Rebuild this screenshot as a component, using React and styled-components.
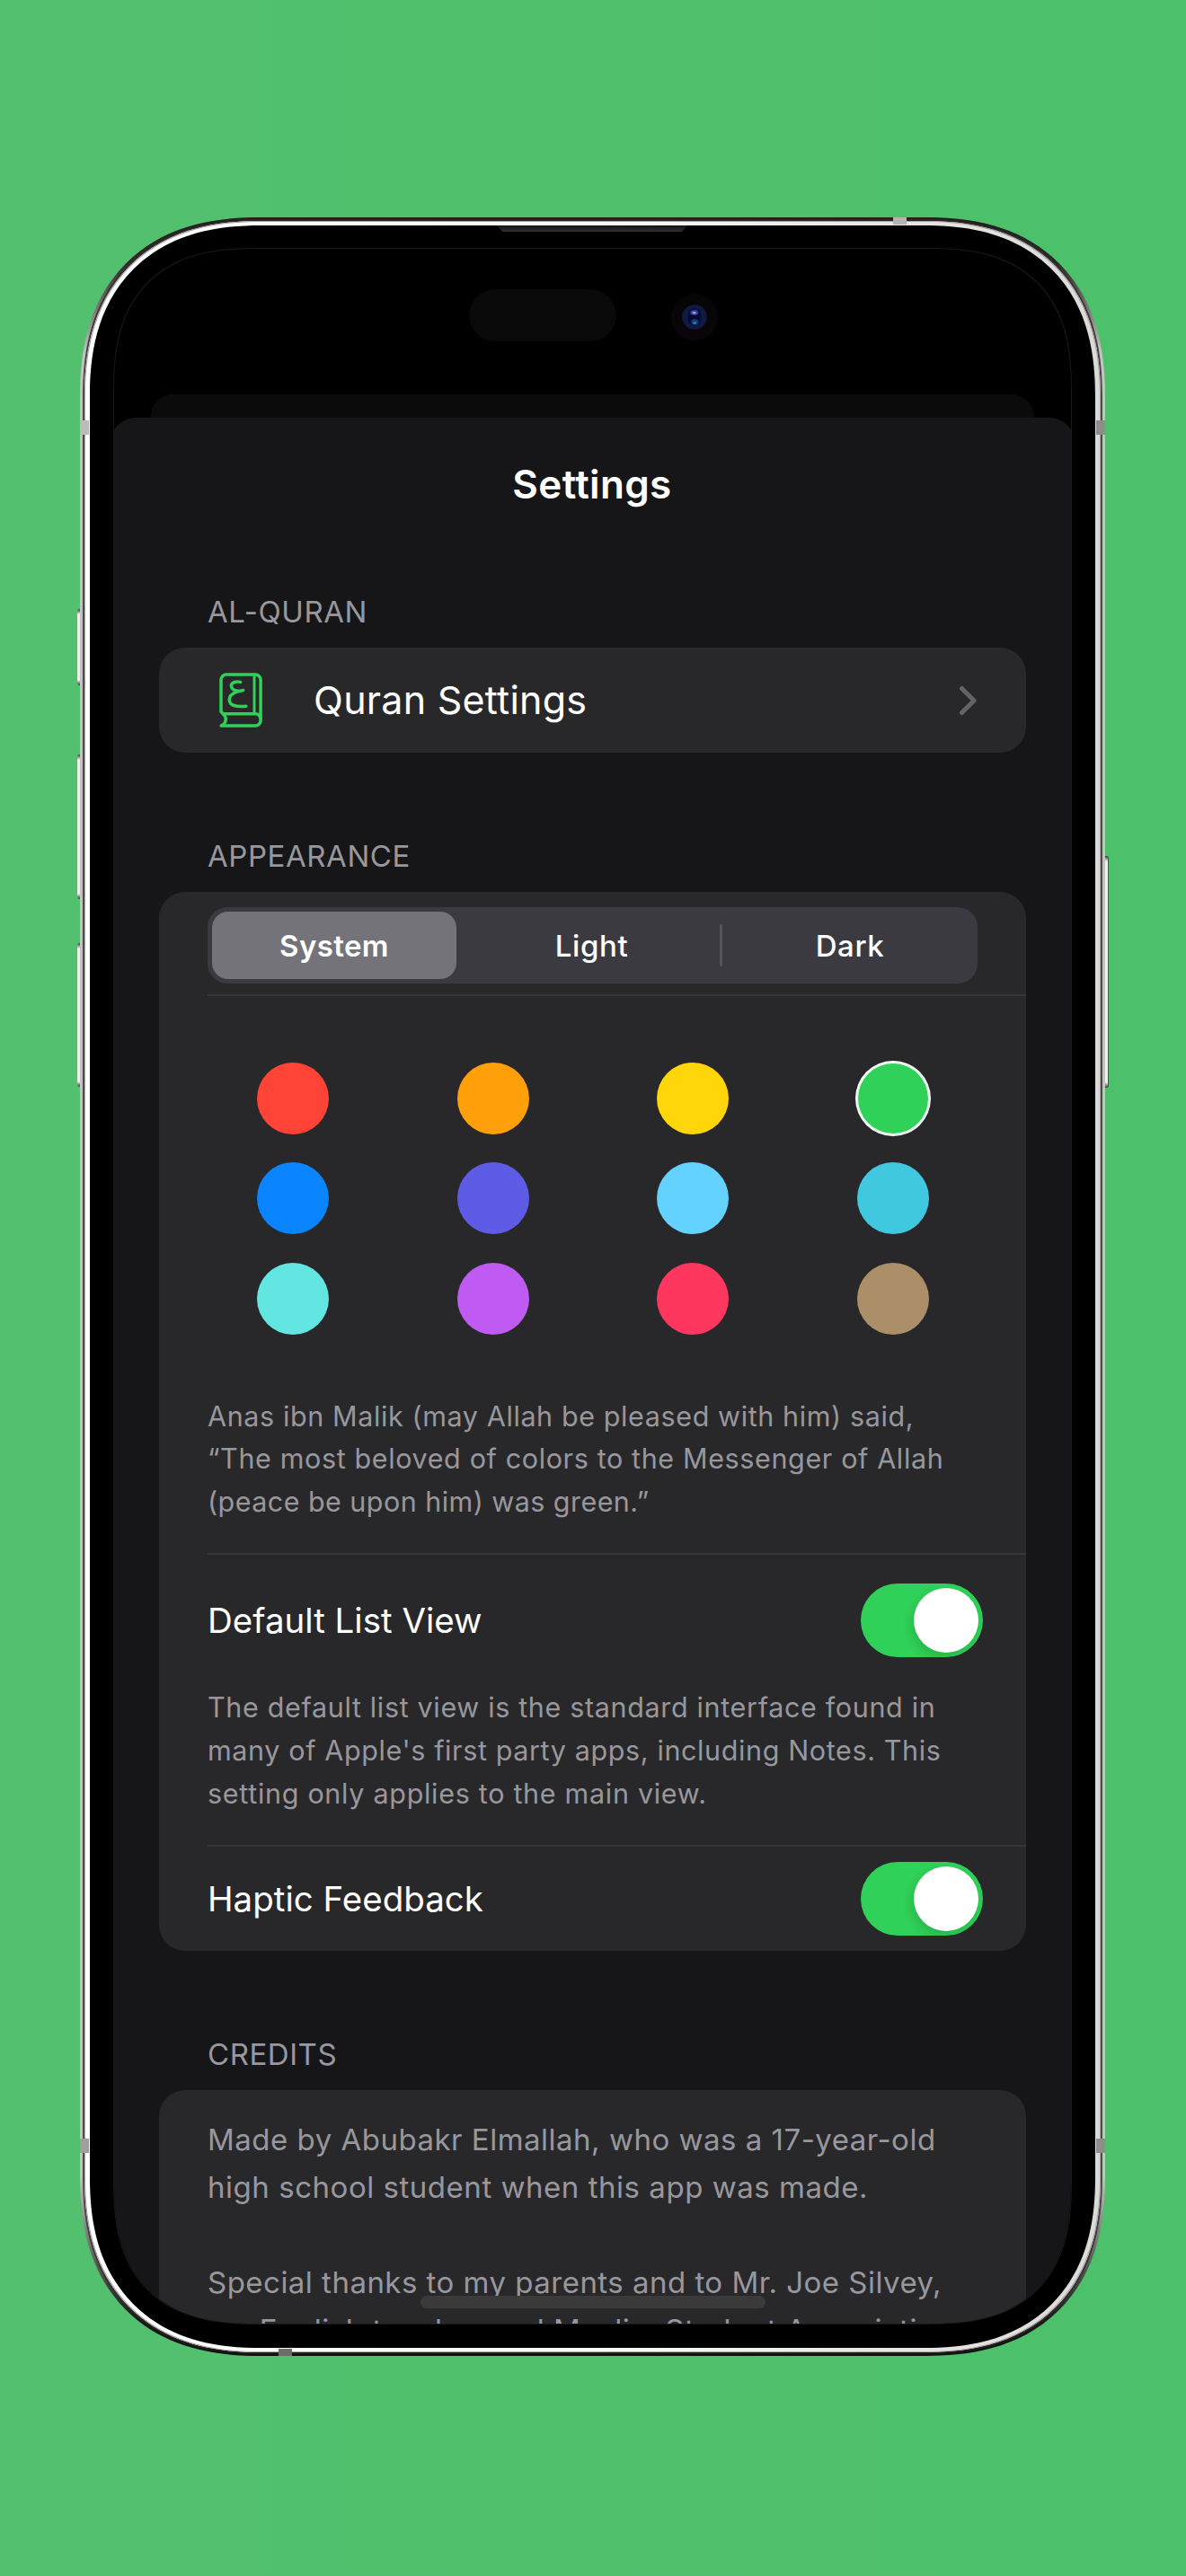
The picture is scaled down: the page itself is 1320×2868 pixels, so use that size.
import React from "react";
import styled, { createGlobalStyle } from "styled-components";

const GlobalStyle = createGlobalStyle`
  * { box-sizing: border-box; }
  html, body { margin: 0; padding: 0; }
  body { font-family: Inter, "Liberation Sans", sans-serif; -webkit-font-smoothing: antialiased; }
`;

const Page = styled.main`
  width: 1320px;
  height: 2868px;
  padding: 242px 90px 0 89px;
  overflow: hidden;
  background: linear-gradient(90deg, #53c06f, #4cc06b);
`;

const Device = styled.div`
  position: relative;
  width: 1141px;
  height: 2381px;
`;

/* Continuous (superelliptic) corners where the browser has them, circular ones elsewhere. */
const continuous = (radius, extent, k) => `
  border-radius: ${radius}px;
  @supports (corner-shape: superellipse(1.2)) {
    border-radius: ${extent}px;
    corner-shape: superellipse(${k});
  }
`;

const OuterRim = styled.div`
  height: 100%;
  padding: 2px 3px;
  background: linear-gradient(180deg, #231f1e 0, #2b2726 50px, #c4c3c1 150px, #c4c3c1 2180px, #1a1918 2340px, #111 100%);
  ${continuous(176, 200, 1.23)}
`;

const DarkRim = styled.div`
  height: 100%;
  padding: 2px;
  background: linear-gradient(180deg, #2a2626, #4d4b4a 200px, #4d4b4a 2200px, #1d1c1b);
  ${continuous(174, 198, 1.23)}
`;

const SteelRim = styled.div`
  height: 100%;
  padding: 5px 6px;
  background: linear-gradient(90deg, #fff 0, #fbfbfa 50%, #dcdad8 100%);
  box-shadow: inset 0 0 0 1px #a9a7a5;
  ${continuous(172, 196, 1.23)}
`;

const Bezel = styled.div`
  height: 100%;
  padding: 26px 27px 26px 27px;
  background: #000;
  ${continuous(166, 190, 1.23)}
`;

const Screen = styled.div`
  position: relative;
  display: flex;
  flex-direction: column;
  height: 2310px;
  overflow: hidden;
  background: #000;
  box-shadow: 0 0 0 1px #191919;
  ${continuous(130, 160, 1.35)}
`;

const SideButton = styled.div`
  position: absolute;
  left: ${(p) => (p.$side === "left" ? "-3px" : "1141px")};
  top: ${(p) => p.$top}px;
  width: ${(p) => (p.$side === "left" ? 3 : 4)}px;
  height: ${(p) => p.$height}px;
  background: linear-gradient(180deg, #3b3836 0, #f1f0ef 6px, #f1f0ef calc(100% - 6px), #3b3836 100%);
  border-radius: ${(p) => (p.$side === "left" ? "3px 0 0 3px" : "0 3px 3px 0")};
  box-shadow: ${(p) => (p.$side === "left" ? "none" : "inset -1px 0 0 #55524f")};
`;

const AntennaBand = styled.div`
  position: absolute;
  left: ${(p) => p.$left}px;
  top: ${(p) => p.$top}px;
  width: ${(p) => p.$width}px;
  height: ${(p) => p.$height}px;
  background: ${(p) => p.$color};
`;

const Speaker = styled.div`
  position: absolute;
  left: 464px;
  top: 9px;
  width: 212px;
  height: 7px;
  background: linear-gradient(180deg, #141414, #2f2f2f);
  clip-path: polygon(0 0, 100% 0, calc(100% - 6px) 100%, 6px 100%);
`;

const StatusArea = styled.div`
  display: flex;
  flex: none;
  align-items: center;
  gap: 61px;
  height: 162px;
  padding: 0 0 14px 395px;
`;

const Island = styled.div`
  width: 164px;
  height: 58px;
  border-radius: 29px;
  background: #090909;
`;

const Camera = styled.div`
  display: flex;
  align-items: center;
  justify-content: center;
  width: 52px;
  height: 52px;
  margin-top: 4px;
  border-radius: 50%;
  background: linear-gradient(180deg, #050505, #0b050b);
`;

const BackSheet = styled.div`
  flex: none;
  height: 26px;
  margin: 0 41px;
  border-radius: 25px 25px 0 0;
  background: #0b0b0b;
`;

const Sheet = styled.section`
  flex: 1;
  margin: 0 -4px;
  padding: 44px 55px 0 54px;
  border-radius: 28px 28px 0 0;
  background: #161618;
`;

const Title = styled.h1`
  margin: 0 0 90px;
  text-align: center;
  font-size: 44px;
  font-weight: 600;
  line-height: 60px;
  letter-spacing: 0.35px;
  color: #fff;
`;

const SectionLabel = styled.h2`
  margin: 0 0 18px 54px;
  font-size: 33px;
  font-weight: 400;
  line-height: 44px;
  letter-spacing: 0.55px;
  color: #98979e;
`;

const Card = styled.div`
  width: 965px;
  height: ${(p) => p.$height}px;
  margin-bottom: 93px;
  border-radius: 29px;
  background: #28282a;
`;

const LinkRow = styled.div`
  display: flex;
  align-items: center;
  height: 100%;
  padding: 0 54px 0 67px;
`;

const LinkText = styled.span`
  flex: 1;
  margin: -1px 0 0 57px;
  font-size: 43px;
  line-height: 60px;
  letter-spacing: 0.25px;
  color: #fff;
`;

const Inset = styled.div`
  margin-left: 54px;
  height: ${(p) => p.$height}px;
  padding: ${(p) => p.$pad || "0"};
  border-bottom: ${(p) => (p.$last ? "0" : "2px solid #363638")};
`;

const Segmented = styled.div`
  display: grid;
  grid-template-columns: 280px 285px 3px 284px;
  align-items: center;
  width: 857px;
  height: 85px;
  padding: 5px 0 5px 5px;
  border-radius: 22px;
  background: #3b3a40;
`;

const Segment = styled.div`
  display: flex;
  align-items: center;
  justify-content: center;
  width: ${(p) => (p.$active ? "272px" : "auto")};
  height: 75px;
  border-radius: 18px;
  background: ${(p) => (p.$active ? "#747379" : "transparent")};
  font-size: 33px;
  font-weight: ${(p) => (p.$active ? 600 : 500)};
  letter-spacing: ${(p) => (p.$active ? 0.4 : 0.6)}px;
  color: #fff;
`;

const SegmentDivider = styled.div`
  height: 47px;
  border-radius: 2px;
  background: #55545a;
`;

const Swatches = styled.div`
  display: grid;
  grid-template-columns: repeat(4, 80px);
  justify-content: space-between;
  row-gap: 31.3px;
  width: 748px;
  margin: 0 0 67px 55px;
`;

const Swatch = styled.div`
  height: 80px;
  border-radius: 50%;
  background: ${(p) => p.$color};
  box-shadow: ${(p) => (p.$selected ? "0 0 0 2px #fff, inset 0 0 0 1px #fff" : "none")};
`;

const Note = styled.p`
  margin: 0;
  font-size: ${(p) => p.$size}px;
  line-height: ${(p) => p.$leading}px;
  color: #98979e;
`;

const Line = styled.span`
  display: block;
  min-height: 1em;
  white-space: nowrap;
  letter-spacing: ${(p) => p.$track}px;
`;

const SwitchRow = styled.div`
  display: flex;
  align-items: center;
  justify-content: space-between;
  height: ${(p) => p.$height}px;
  padding-right: 48px;
  font-size: 38.5px;
  color: #fff;
`;

const Switch = styled.div`
  display: flex;
  justify-content: flex-end;
  align-items: center;
  width: 136px;
  height: 82px;
  padding-right: 5px;
  border-radius: 41px;
  background: #2fd158;
`;

const Knob = styled.div`
  width: 72px;
  height: 72px;
  border-radius: 50%;
  background: #fff;
  box-shadow: -2px 5px 12px rgba(0, 0, 0, 0.14);
`;

const SwitchTrack = styled(Switch)`
  overflow: hidden;
`;

const HomeIndicator = styled.div`
  position: absolute;
  left: 341px;
  bottom: 17px;
  width: 384px;
  height: 14px;
  border-radius: 7px;
  background: #3a3a3b;
`;

const BookIcon = () => (
  <svg width="48" height="61" viewBox="0 0 48 61" fill="none" stroke="#2fd158" strokeWidth="3.5" strokeLinecap="round" strokeLinejoin="round">
    <path d="M2 43.5V8a6.1 6.1 0 0 1 6.1-6.1H40a6.1 6.1 0 0 1 6.1 6.1V53a6.1 6.1 0 0 1-6.1 6.1H2.1C8.6 55.5 9.4 49.5 2 43.5Z" />
    <path strokeWidth="3" d="M39 2V45" />
    <path d="M4 45.7H40.5C43.5 45.7 46 48.5 46 51" />
    <path d="M23.6 10.4C19 9.2 13.6 10.4 13.4 14.6C13.3 18 17 20 20.5 20M26.6 19.4C17 21 11.2 24.2 11.2 30C11.2 36.6 19 38.4 29.8 37.2" />
  </svg>
);

const Chevron = () => (
  <svg width="21" height="34" viewBox="0 0 21 34" fill="none" stroke="#636366" strokeWidth="5" strokeLinecap="round" strokeLinejoin="round">
    <path d="M3.5 3.5L17 17L3.5 30.5" />
  </svg>
);

const Lens = () => (
  <svg width="28" height="28" viewBox="0 0 28 28">
    <circle cx="14" cy="14" r="13.8" fill="#11193c" />
    <circle cx="14" cy="14" r="11" fill="#0b1c52" />
    <rect x="6.5" y="4.5" width="15" height="19" rx="7" fill="#080a2b" />
    <ellipse cx="13.8" cy="9" rx="4.5" ry="3" fill="#3d3a9a" />
    <ellipse cx="13.6" cy="9.2" rx="2" ry="1.2" fill="#9a9be8" />
    <ellipse cx="14.2" cy="19.5" rx="4" ry="3.2" fill="#143a86" />
    <circle cx="14.2" cy="20.5" r="1.6" fill="#2c7fae" />
  </svg>
);

const colors = [
  "#ff4336", "#ff9f0a", "#ffd60a", "#30d158",
  "#0a84ff", "#5e5ce6", "#64d2ff", "#40c8e0",
  "#63e6e2", "#bf5af2", "#ff375f", "#ac8e68",
];

const quote = [
  ["Anas ibn Malik (may Allah be pleased with him) said,", 0.61],
  ["“The most beloved of colors to the Messenger of Allah", 0.63],
  ["(peace be upon him) was green.”", 0.45],
];
const listNote = [
  ["The default list view is the standard interface found in", 0.66],
  ["many of Apple's first party apps, including Notes. This", 0.62],
  ["setting only applies to the main view.", 0.7],
];
const credits = [
  ["Made by Abubakr Elmallah, who was a 17-year-old", 0.5],
  ["high school student when this app was made.", 0.53],
  ["\u00a0", 0],
  ["Special thanks to my parents and to Mr. Joe Silvey,", 0.48],
  ["my English teacher and Muslim Student Association", 0.5],
];

const Lines = ({ items }) => items.map(([text, track], i) => <Line key={i} $track={track}>{text}</Line>);

export default function App() {
  return (
    <>
      <GlobalStyle />
      <Page>
        <Device>
          <SideButton $side="left" $top={436} $height={85} />
          <SideButton $side="left" $top={598} $height={161} />
          <SideButton $side="left" $top={808} $height={160} />
          <SideButton $side="right" $top={711} $height={258} />
          <OuterRim>
            <DarkRim>
              <SteelRim>
                <Bezel>
                  <Screen>
                    <StatusArea>
                      <Island />
                      <Camera><Lens /></Camera>
                    </StatusArea>
                    <BackSheet />
                    <Sheet>
                      <Title>Settings</Title>
                      <SectionLabel>AL-QURAN</SectionLabel>
                      <Card $height={117}>
                        <LinkRow>
                          <BookIcon />
                          <LinkText>Quran Settings</LinkText>
                          <Chevron />
                        </LinkRow>
                      </Card>
                      <SectionLabel>APPEARANCE</SectionLabel>
                      <Card $height={1179}>
                        <Inset $height={116} $pad="17px 0 0">
                          <Segmented>
                            <Segment $active>System</Segment>
                            <Segment>Light</Segment>
                            <SegmentDivider />
                            <Segment>Dark</Segment>
                          </Segmented>
                        </Inset>
                        <Inset $height={622} $pad="74px 0 0">
                          <Swatches>
                            {colors.map((c, i) => <Swatch key={c} $color={c} $selected={i === 3} />)}
                          </Swatches>
                          <Note $size={30.5} $leading={47.8}><Lines items={quote} /></Note>
                        </Inset>
                        <Inset $height={325}>
                          <SwitchRow $height={146}>
                            Default List View
                            <SwitchTrack><Knob /></SwitchTrack>
                          </SwitchRow>
                          <Note $size={30.5} $leading={47.8}><Lines items={listNote} /></Note>
                        </Inset>
                        <Inset $height={116} $last>
                          <SwitchRow $height={116}>
                            Haptic Feedback
                            <SwitchTrack><Knob /></SwitchTrack>
                          </SwitchRow>
                        </Inset>
                      </Card>
                      <SectionLabel>CREDITS</SectionLabel>
                      <Card $height={420}>
                        <Inset $height={420} $pad="29px 0 0" $last>
                          <Note $size={33} $leading={53}><Lines items={credits} /></Note>
                        </Inset>
                      </Card>
                    </Sheet>
                    <HomeIndicator />
                  </Screen>
                </Bezel>
              </SteelRim>
            </DarkRim>
          </OuterRim>
          <Speaker />
          <AntennaBand $left={905} $top={0} $width={15} $height={8} $color="#b5b3b1" />
          <AntennaBand $left={221} $top={2373} $width={15} $height={8} $color="#6f6d6b" />
          <AntennaBand $left={0} $top={226} $width={10} $height={16} $color="#bdbbb9" />
          <AntennaBand $left={0} $top={2139} $width={10} $height={16} $color="#a19f9c" />
          <AntennaBand $left={1131} $top={226} $width={10} $height={16} $color="#8f8d8a" />
          <AntennaBand $left={1131} $top={2139} $width={10} $height={16} $color="#8f8d8a" />
        </Device>
      </Page>
    </>
  );
}
